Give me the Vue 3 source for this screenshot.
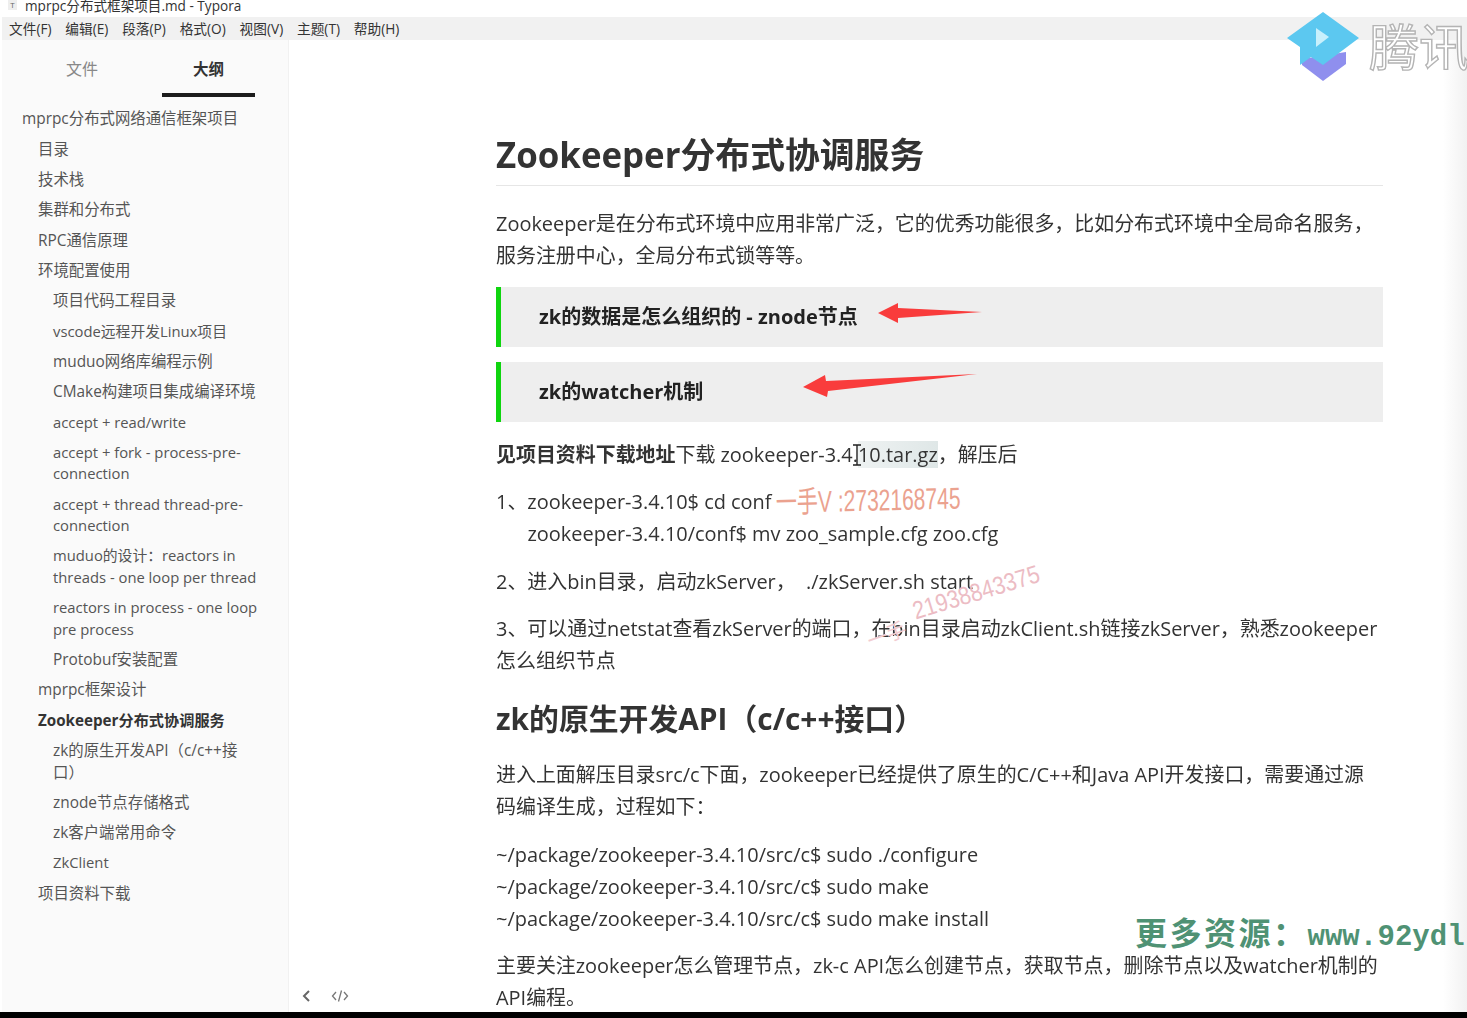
<script setup>
const menus = ['文件(F)', '编辑(E)', '段落(P)', '格式(O)', '视图(V)', '主题(T)', '帮助(H)']

// tight = rows that are mostly latin, they run a bit narrower in the original
const outline = [
  { level: 0, text: 'mprpc分布式网络通信框架项目' },
  { level: 1, text: '目录' },
  { level: 1, text: '技术栈' },
  { level: 1, text: '集群和分布式' },
  { level: 1, text: 'RPC通信原理' },
  { level: 1, text: '环境配置使用' },
  { level: 2, text: '项目代码工程目录' },
  { level: 2, text: 'vscode远程开发Linux项目', tight: true },
  { level: 2, text: 'muduo网络库编程示例' },
  { level: 2, text: 'CMake构建项目集成编译环境' },
  { level: 2, text: 'accept + read/write', tight: true },
  { level: 2, text: 'accept + fork - process-pre-\nconnection', tight: true },
  { level: 2, text: 'accept + thread thread-pre-\nconnection', tight: true },
  { level: 2, text: 'muduo的设计：reactors in\nthreads - one loop per thread', tight: true },
  { level: 2, text: 'reactors in process - one loop\npre process', tight: true },
  { level: 2, text: 'Protobuf安装配置' },
  { level: 1, text: 'mprpc框架设计' },
  { level: 1, text: 'Zookeeper分布式协调服务', active: true },
  { level: 2, text: 'zk的原生开发API（c/c++接\n口）' },
  { level: 2, text: 'znode节点存储格式' },
  { level: 2, text: 'zk客户端常用命令' },
  { level: 2, text: 'ZkClient', tight: true },
  { level: 1, text: '项目资料下载' },
]
</script>

<template>
  <div class="window">
    <div class="titlebar">
      <span class="appicon">T</span>
      <span>mprpc分布式框架项目.md - Typora</span>
    </div>
    <div class="menubar">
      <span v-for="m in menus" :key="m">{{ m }}</span>
    </div>

    <div class="body">
      <aside class="sidebar">
        <div class="tabs">
          <div class="tab">文件</div>
          <div class="tab active">大纲</div>
        </div>
        <ul class="outline">
          <li
            v-for="item in outline"
            :key="item.text"
            :class="['lv' + item.level, { active: item.active, tight: item.tight }]"
          >{{ item.text }}</li>
        </ul>
      </aside>

      <main class="content">
        <div class="doc">
          <h1>Zookeeper分布式协调服务</h1>
          <p>Zookeeper是在分布式环境中应用非常广泛，它的优秀功能很多，比如分布式环境中全局命名服务，<br>服务注册中心，全局分布式锁等等。</p>
          <blockquote>zk的数据是怎么组织的 - znode节点</blockquote>
          <blockquote>zk的watcher机制</blockquote>
          <p><strong>见项目资料下载地址</strong>下载 zookeeper-3.4.<span class="selected">10.tar.gz</span>，解压后</p>
          <p>1、zookeeper-3.4.10$ cd conf<br><span class="indent">zookeeper-3.4.10/conf$ mv zoo_sample.cfg zoo.cfg</span></p>
          <p>2、进入bin目录，启动zkServer，&nbsp; ./zkServer.sh start</p>
          <p>3、可以通过netstat查看zkServer的端口，在bin目录启动zkClient.sh链接zkServer，熟悉zookeeper<br>怎么组织节点</p>
          <h2>zk的原生开发API（c/c++接口）</h2>
          <p>进入上面解压目录src/c下面，zookeeper已经提供了原生的C/C++和Java API开发接口，需要通过源<br>码编译生成，过程如下：</p>
          <p>~/package/zookeeper-3.4.10/src/c$ sudo ./configure<br>~/package/zookeeper-3.4.10/src/c$ sudo make<br>~/package/zookeeper-3.4.10/src/c$ sudo make install</p>
          <p>主要关注zookeeper怎么管理节点，zk-c API怎么创建节点，获取节点，删除节点以及watcher机制的<br>API编程。</p>
        </div>
        <div class="footer-tools">
          <svg width="10" height="14" viewBox="0 0 10 14" fill="none" stroke="#666" stroke-width="2"><path d="M8 2 3 7l5 5" /></svg>
          <svg width="18" height="14" viewBox="0 0 18 14" fill="none" stroke="#777" stroke-width="1.3"><path d="M5 3 1.5 7 5 11M13 3l3.5 4-3.5 4M10.5 1.5l-3 11" /></svg>
        </div>
      </main>
    </div>
    <div class="bottom-band"></div>

    <!-- things burned into the video frame, over the page -->
    <div class="edge-fade"></div>
    <svg class="logo" width="76" height="72" viewBox="0 0 76 72">
      <path d="M17 48v6l21 16 23-17V41z" fill="#8f8fee" />
      <path d="M38 1 74 27 38 54 26 46 15 54V36L2 27z" fill="#5cc8f0" />
      <path d="M31 17 44 26 31 36z" fill="#c8f0fc" />
    </svg>
    <div class="brand">腾讯课堂</div>
    <div class="res-mark"><em>更多资源：</em><span>www. 92ydl</span></div>
    <svg class="arrows" width="1467" height="1018" viewBox="0 0 1467 1018">
      <path d="M878 313 898 303 898 308 982 312 898 318 898 323z" fill="#f93c3c" />
      <path d="M803 387 825 375 826 381 977 374 828 391 827 397z" fill="#f93c3c" />
    </svg>
    <div class="hand hand-one">一手V :2732168745</div>
    <div class="hand hand-two">21938843375</div>
    <div class="hand hand-three">一手</div>
    <svg class="ibeam" width="12" height="22" viewBox="0 0 12 22" fill="none" stroke="#222" stroke-width="1.4"><path d="M2 1h8M6 1v20M2 21h8" /></svg>
  </div>
</template>

<style>
html, body {
  margin: 0;
  background: #000;
  overflow: hidden;
}
</style>

<style scoped>
.window {
  position: relative;
  width: 1467px;
  height: 1018px;
  overflow: hidden;
  display: flex;
  flex-direction: column;
  background: #fff;
  box-sizing: border-box;
  padding-left: 2px;
  font-family: "Open Sans", "Noto Sans CJK SC", sans-serif;
  color: #333;
}

.titlebar {
  height: 17px;
  flex: none;
  display: flex;
  align-items: flex-start;
  gap: 8px;
  padding-left: 6px;
  font-size: 13.6px;
  line-height: 11px;
  color: #333;
  background: #fff;
  overflow: hidden;
}

.appicon {
  width: 9px;
  height: 10px;
  font-size: 8px;
  line-height: 10px;
  text-align: center;
  color: #666;
  background: #eee;
}

.menubar {
  height: 21px;
  flex: none;
  display: flex;
  align-items: center;
  gap: 13.8px;
  padding: 0 0 2px 7px;
  font-size: 13.7px;
  color: #333;
  background: #f1f1f1;
}

.body {
  flex: 1;
  display: flex;
  min-height: 0;
}

.sidebar {
  width: 287px;
  flex: none;
  box-sizing: border-box;
  background: #fafafa;
  border-right: 1px solid #f1f1f1;
}

.tabs {
  display: flex;
  gap: 33.5px;
  padding: 14px 0 0 33.5px;
}

.tab {
  width: 93px;
  height: 39px;
  text-align: center;
  font-size: 16px;
  line-height: 30px;
  color: #888;
}

.tab.active {
  font-weight: 700;
  color: #333;
  font-size: 15.5px;
  border-bottom: 4px solid #1c1c1c;
}

.outline {
  list-style: none;
  margin: 0;
  padding: 7px 20px 0 0;
  font-size: 15.4px;
  line-height: 21.5px;
  color: #555;
}

.outline li {
  padding: 4.42px 0;
  white-space: pre-line;
}

.outline .tight {
  font-size: 14.8px;
}

.lv0 { padding-left: 20px !important; }
.lv1 { padding-left: 36px !important; }
.lv2 { padding-left: 51px !important; }

.outline .active {
  font-size: 15.2px;
  font-weight: 700;
  color: #333;
}

.content {
  position: relative;
  flex: 1;
  min-width: 0;
  overflow: hidden;
  padding-left: 207px;
}

.doc {
  width: 887px;
  padding-top: 90px;
  font-size: 19.95px;
  line-height: 32px;
  white-space: nowrap;
  filter: blur(0.3px);
}

h1 {
  margin: 0 0 21.5px;
  padding-bottom: 5px;
  font-size: 34.85px;
  line-height: 50px;
  font-weight: 700;
  border-bottom: 1px solid #e6e6e6;
}

h2 {
  margin: 19.2px 0 18.5px;
  font-size: 29.85px;
  line-height: 44px;
  font-weight: 700;
}

p {
  margin: 15.6px 0;
}

blockquote {
  margin: 15.6px 0;
  height: 59.5px;
  padding-left: 38px;
  border-left: 5px solid #0fd50f;
  background: #eeeeee;
  font-size: 20px;
  font-weight: 700;
  line-height: 59.5px;
  color: #222;
}

blockquote + p {
  margin-top: 17px;
}

strong {
  font-weight: 700;
}

.selected {
  background: linear-gradient(90deg, #eef2f2, #dfe7e7);
}

.indent {
  padding-left: 31.5px;
}

.footer-tools {
  position: absolute;
  left: 12px;
  bottom: 9px;
  display: flex;
  align-items: center;
  gap: 20px;
}

.bottom-band {
  height: 6px;
  flex: none;
  margin-left: -2px;
  background: #000;
}

.edge-fade {
  position: absolute;
  top: 40px;
  right: 0;
  bottom: 6px;
  width: 24px;
  background: linear-gradient(90deg, rgba(240, 240, 240, 0), rgba(240, 240, 240, 0.9));
}

.logo {
  position: absolute;
  left: 1285px;
  top: 11px;
}

.brand {
  position: absolute;
  left: 1369px;
  top: 14px;
  font-size: 50px;
  line-height: 66px;
  white-space: nowrap;
  color: #fff;
  -webkit-text-stroke: 1.4px #b4b4b4;
}

.res-mark {
  position: absolute;
  left: 1135px;
  top: 915px;
  font-family: "Liberation Mono", "Noto Sans CJK SC", monospace;
  font-size: 32px;
  line-height: 44px;
  font-weight: 700;
  white-space: nowrap;
  color: #4f9274;
}

.res-mark em {
  font-style: normal;
  letter-spacing: 2.5px;
}

.res-mark span {
  font-size: 29px;
  word-spacing: -17px;
}

.arrows {
  position: absolute;
  inset: 0;
  pointer-events: none;
}

.hand {
  position: absolute;
  white-space: nowrap;
  font-family: "Liberation Sans", "Noto Sans CJK SC", sans-serif;
  transform-origin: left center;
}

.hand-one {
  left: 776px;
  top: 485px;
  font-size: 30px;
  line-height: 36px;
  color: #eba28f;
  transform: scaleX(0.7) rotate(-1deg);
}

.hand-two {
  left: 913px;
  top: 596px;
  font-size: 25px;
  line-height: 30px;
  color: #ecbcc4;
  transform: rotate(-17deg) scaleX(0.86);
}

.hand-three {
  left: 868px;
  top: 630px;
  font-size: 20px;
  line-height: 24px;
  color: #f2ccd0;
  transform: rotate(-20deg);
}

.ibeam {
  position: absolute;
  left: 851px;
  top: 444px;
}
</style>
